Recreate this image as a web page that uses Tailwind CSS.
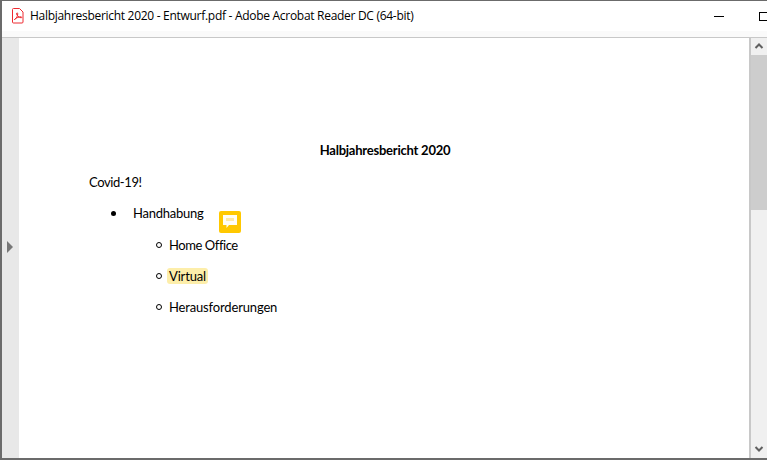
<!DOCTYPE html>
<html lang="de">
<head>
    <meta charset="UTF-8">
    <title>Halbjahresbericht 2020 - Entwurf.pdf - Adobe Acrobat Reader DC (64-bit)</title>
    <script src="https://cdn.jsdelivr.net/npm/@tailwindcss/browser@4"></script>
</head>
<body class="bg-white overflow-hidden">
    <div class="w-[767px] h-[460px] flex flex-col border-t border-[#6b6b6b] border-l-2 border-b-2 overflow-hidden text-black">
        <!-- title bar -->
        <div class="h-[30px] shrink-0 flex items-center pl-[9px] bg-white">
            <svg width="14" height="16" viewBox="0 0 14 16" fill="none" class="shrink-0">
                <path d="M1.500 1.500a1 1 0 0 1 1-1h6l3.500 3.500v10a1 1 0 0 1-1 1h-8.500a1 1 0 0 1-1-1z" stroke="#ee2a30" stroke-width="1"/>
                <path d="M3.500 11.500c1.800-1 3.500-3.500 3.200-6-.2-1.200-1.300-.8-1.100.5.300 1.500 2 3.300 4.400 3.800 1 .2 1-1 0-1-2 0-4.500 1-6 2.200-.8.700-.8 1.100-.5.500z" stroke="#ee2a30" stroke-width="1"/>
            </svg>
            <span class="ml-[5px] font-['Open_Sans',sans-serif] text-[12px] leading-none whitespace-nowrap tracking-[-0.29px]">Halbjahresbericht 2020 - Entwurf.pdf - Adobe Acrobat Reader DC (64-bit)</span>
            <div class="ml-auto flex items-center">
                <div class="w-[10px] h-px bg-black mr-[35px]"></div>
                <div class="w-[9px] h-[9px] border border-black border-r-0 -mr-px"></div>
            </div>
        </div>
        <div class="h-[6px] shrink-0 bg-[#fafafa]"></div>
        <div class="h-px shrink-0 bg-[#c8c8c8]"></div>

        <div class="flex-1 flex min-h-0">
            <!-- collapsed side panel -->
            <div class="w-[17px] shrink-0 bg-[#e8e8e8] flex items-start pl-[5px] pt-[203px]">
                <div class="w-0 h-0 border-y-[6px] border-y-transparent border-l-[6px] border-l-[#777777]"></div>
            </div>

            <!-- document -->
            <div class="w-[730px] shrink-0 bg-white font-['Lato',sans-serif] text-[13px] tracking-[-0.16px] leading-[16px] pt-[104px] pl-[70px] relative">
                <div class="font-bold text-center tracking-[-0.23px] w-[592px]">Halbjahresbericht 2020</div>
                <p class="mt-[16px] tracking-[-0.4px]">Covid-19!</p>
                <div class="mt-[15px] ml-[22px] flex items-center">
                    <span class="w-[5px] h-[5px] rounded-full bg-black"></span>
                    <span class="ml-[17px] tracking-[-0.25px]">Handhabung</span>
                </div>
                <div class="mt-[16px] ml-[67px] flex items-center">
                    <span class="w-[6px] h-[6px] rounded-full border border-black"></span>
                    <span class="ml-[7px] tracking-[-0.43px]">Home Office</span>
                </div>
                <div class="mt-[15px] ml-[67px] flex items-center">
                    <span class="w-[6px] h-[6px] rounded-full border border-black"></span>
                    <span class="ml-[5px] px-[2px] rounded-[3px] bg-[#fdeeaa]">Virtual</span>
                </div>
                <div class="mt-[15px] ml-[67px] flex items-center">
                    <span class="w-[6px] h-[6px] rounded-full border border-black"></span>
                    <span class="ml-[7px]">Herausforderungen</span>
                </div>

                <!-- comment note -->
                <div class="absolute left-[200px] top-[173px] w-[22px] h-[22px] bg-[#ffc800] rounded-[2px] flex items-center justify-center">
                    <svg width="14" height="14" viewBox="0 0 14 14">
                        <path d="M0 0h14v10H6l-2.500 3V10H0z" fill="#fffdf5"/>
                        <rect x="3" y="3" width="8" height="3" fill="#fde9a8"/>
                    </svg>
                </div>
            </div>

            <div class="w-[2px] shrink-0 bg-[#c8c8c8]"></div>

            <!-- scrollbar -->
            <div class="w-[16px] shrink-0 bg-[#f0f0f0] flex flex-col items-center">
                <svg width="16" height="17" viewBox="0 0 16 17" class="shrink-0">
                    <path d="M4.500 10 8 6.500 11.500 10" fill="none" stroke="#606060" stroke-width="2"/>
                </svg>
                <div class="w-[16px] h-[155px] bg-[#cdcdcd]"></div>
                <svg width="16" height="17" viewBox="0 0 16 17" class="mt-auto shrink-0">
                    <path d="M4.500 6 8 9.500 11.500 6" fill="none" stroke="#606060" stroke-width="2"/>
                </svg>
            </div>
        </div>
    </div>
</body>
</html>
